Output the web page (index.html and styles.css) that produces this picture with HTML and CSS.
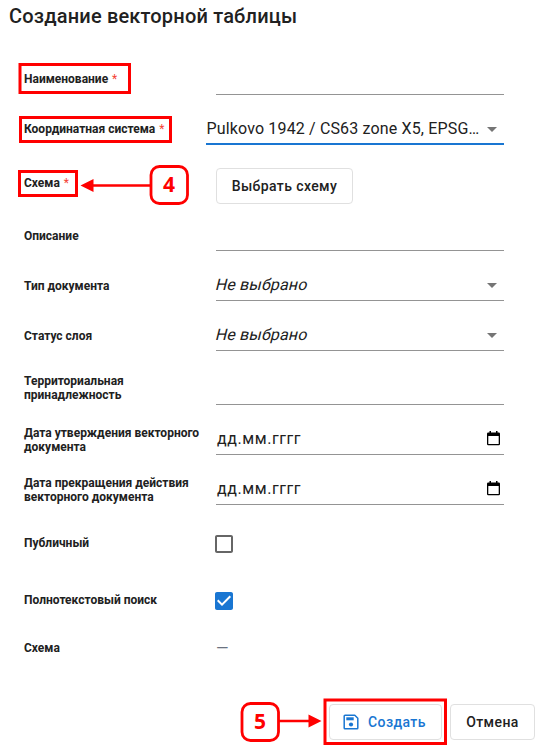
FILE: index.html
```html
<!DOCTYPE html>
<html lang="ru">
<head>
<meta charset="utf-8">
<title>Создание векторной таблицы</title>
<link rel="stylesheet" href="styles.css">
</head>
<body>
<main class="dialog">
  <h1 class="title">Создание векторной таблицы</h1>
  <div class="form">
    <div class="row row-required"><div class="label">Наименование <span class="star">*</span></div><div class="field"></div></div>
    <div class="row row-required"><div class="label">Координатная система <span class="star">*</span></div><div class="field field-focus"><span class="value">Pulkovo 1942 / CS63 zone X5, EPSG…</span><i class="caret"></i></div></div>
    <div class="row row-button"><div class="label">Схема <span class="star">*</span></div><button class="btn btn-schema">Выбрать схему</button></div>
    <div class="row row-description"><div class="label">Описание</div><div class="field"></div></div>
    <div class="row"><div class="label">Тип документа</div><div class="field"><span class="value empty">Не выбрано</span><i class="caret"></i></div></div>
    <div class="row"><div class="label">Статус слоя</div><div class="field"><span class="value empty">Не выбрано</span><i class="caret"></i></div></div>
    <div class="row row-territory"><div class="label">Территориальная<br>принадлежность</div><div class="field"></div></div>
    <div class="row row-date"><div class="label">Дата утверждения векторного<br>документа</div><div class="field"><span class="value date">дд.мм.гггг</span><svg class="calendar" width="14" height="15" viewBox="0 0 14 15"><path fill-rule="evenodd" d="M2.500 0H4v1.500h5V0h1.500v1.500h1.200A1.300 1.300 0 0 1 13 2.800v10.200a1.300 1.300 0 0 1-1.300 1.300H1.300A1.300 1.300 0 0 1 0 13V2.800a1.300 1.300 0 0 1 1.300-1.300h1.200zM1.300 5v8h10.400V5z"/></svg></div></div>
    <div class="row row-date"><div class="label">Дата прекращения действия<br>векторного документа</div><div class="field"><span class="value date">дд.мм.гггг</span><svg class="calendar" width="14" height="15" viewBox="0 0 14 15"><path fill-rule="evenodd" d="M2.500 0H4v1.500h5V0h1.500v1.500h1.200A1.300 1.300 0 0 1 13 2.800v10.200a1.300 1.300 0 0 1-1.300 1.300H1.300A1.300 1.300 0 0 1 0 13V2.800a1.300 1.300 0 0 1 1.300-1.300h1.200zM1.300 5v8h10.400V5z"/></svg></div></div>
    <div class="row row-public"><div class="label">Публичный</div><svg class="check" width="18" height="18" viewBox="3 3 18 18"><path fill="#666" d="M19 5v14H5V5h14m0-2H5c-1.100 0-2 .9-2 2v14c0 1.100.9 2 2 2h14c1.100 0 2-.9 2-2V5c0-1.100-.9-2-2-2z"/></svg></div>
    <div class="row row-search"><div class="label">Полнотекстовый поиск</div><svg class="check" width="18" height="18" viewBox="3 3 18 18"><path fill="#1976d2" d="M19 3H5c-1.110 0-2 .9-2 2v14c0 1.100.89 2 2 2h14c1.110 0 2-.9 2-2V5c0-1.100-.89-2-2-2zm-9 14l-5-5 1.410-1.410L10 14.170l7.590-7.590L19 8l-9 9z"/></svg></div>
    <div class="row row-dash"><div class="label">Схема</div><span class="dash">—</span></div>
  </div>
  <footer class="actions">
    <button class="btn btn-create"><svg width="16" height="16" viewBox="0 0 16 16"><path fill="none" stroke="currentColor" stroke-width="1.500" stroke-linejoin="round" d="M2 1.200h9.800l3 3V14a.8.8 0 0 1-.8.8H2a.8.8 0 0 1-.8-.8V2a.8.8 0 0 1 .8-.8z"/><path fill="currentColor" d="M3.300 3.300h7.400v3H3.300z"/><circle cx="8" cy="10.500" r="2.100" fill="currentColor"/></svg>Создать</button>
    <button class="btn btn-cancel">Отмена</button>
  </footer>
  <svg class="notes" width="541" height="745" viewBox="0 0 541 745">
    <g fill="none" stroke="#f00" stroke-width="3">
      <rect x="20" y="64.500" width="109.500" height="28"/>
      <rect x="20.500" y="117.500" width="150" height="24"/>
      <rect x="19.500" y="171.500" width="57" height="24"/>
      <rect x="325" y="700" width="120.500" height="43.500"/>
      <path d="M92 185.500h58M279 721h31" stroke-width="2.500"/>
      <rect x="151" y="166.500" width="36.500" height="37" rx="8.500" stroke-width="2.800"/>
      <rect x="242" y="703.500" width="36.500" height="37" rx="8.500" stroke-width="2.800"/>
    </g>
    <path fill="#f00" d="M80.500 185.500l13-6.500v13zM321.500 721l-13-6.500v13z"/>
    <text x="169" y="192">4</text>
    <text x="260" y="729">5</text>
  </svg>
</main>
</body>
</html>
```

FILE: styles.css
```css
* { box-sizing: border-box; }
body { margin: 0; background: #fff; color: #212121; font-family: Roboto, sans-serif; overflow: hidden; }
.dialog { position: relative; width: 541px; height: 745px; }
.title { margin: 0; height: 45px; padding: 0 9px; font-size: 20px; font-weight: 500; line-height: 32px; letter-spacing: .18px; white-space: nowrap; }
.form { display: flex; flex-direction: column; width: 504px; padding-left: 24px; }
.row { display: grid; grid-template-columns: 192px 288px; align-items: end; height: 50px; }
.label { padding-bottom: 8px; font-size: 12px; font-weight: 700; line-height: 14px; white-space: nowrap; }
.star { margin-left: 1px; color: #f44336; font-weight: 400; }
.field { display: flex; align-items: center; justify-content: space-between; height: 32px; border-bottom: 1px solid #949494; }
.field-focus { width: 298px; height: 31px; margin-left: -10px; border-bottom: 2px solid #1976d2; }
.value { font-size: 16px; line-height: 20px; letter-spacing: .15px; white-space: nowrap; }
.field-focus .value { padding-left: .5px; }
.empty { letter-spacing: .15px; transform: skewX(-14deg); }
.date { padding-left: 1px; letter-spacing: .55px; }
.caret { position: relative; top: 1px; margin-right: 7px; border: 5px solid transparent; border-top-color: #757575; border-bottom: 0; }
.calendar { margin-right: 3px; }
.row-required .label { padding-bottom: 9px; }
.row-button { height: 59px; }
.row-button .label { padding-bottom: 14px; }
.row-description { height: 47px; }
.row-territory { height: 54px; }
.row-territory .label { padding-bottom: 3px; }
.row-date .label { padding-bottom: 1px; }
.row-public { height: 48px; }
.row-search { height: 57px; }
.row-public .label, .row-search .label { padding-bottom: 3px; }
.check { display: block; margin-left: -1px; }
.row-dash { height: 45px; }
.row-dash .label { padding-bottom: 0; }
.dash { margin-bottom: -1px; color: #6b7280; font-size: 16px; line-height: 14px; }
.btn { display: flex; align-items: center; justify-content: center; height: 36px; padding: 0; border: 1px solid #e0e0e0; border-radius: 4px; background: #fff; color: #212121; font: 500 14px/20px Roboto, sans-serif; letter-spacing: .4px; }
.btn-schema { width: 137px; }
.actions { display: flex; gap: 8px; padding: 49px 0 0 329px; }
.btn-create { justify-content: flex-start; width: 113px; padding-left: 13px; gap: 9px; color: #1976d2; }
.btn-cancel { width: 85px; }
.notes { position: absolute; inset: 0; pointer-events: none; }
.notes text { fill: #f00; font: 700 21px "Open Sans", sans-serif; text-anchor: middle; }
```
